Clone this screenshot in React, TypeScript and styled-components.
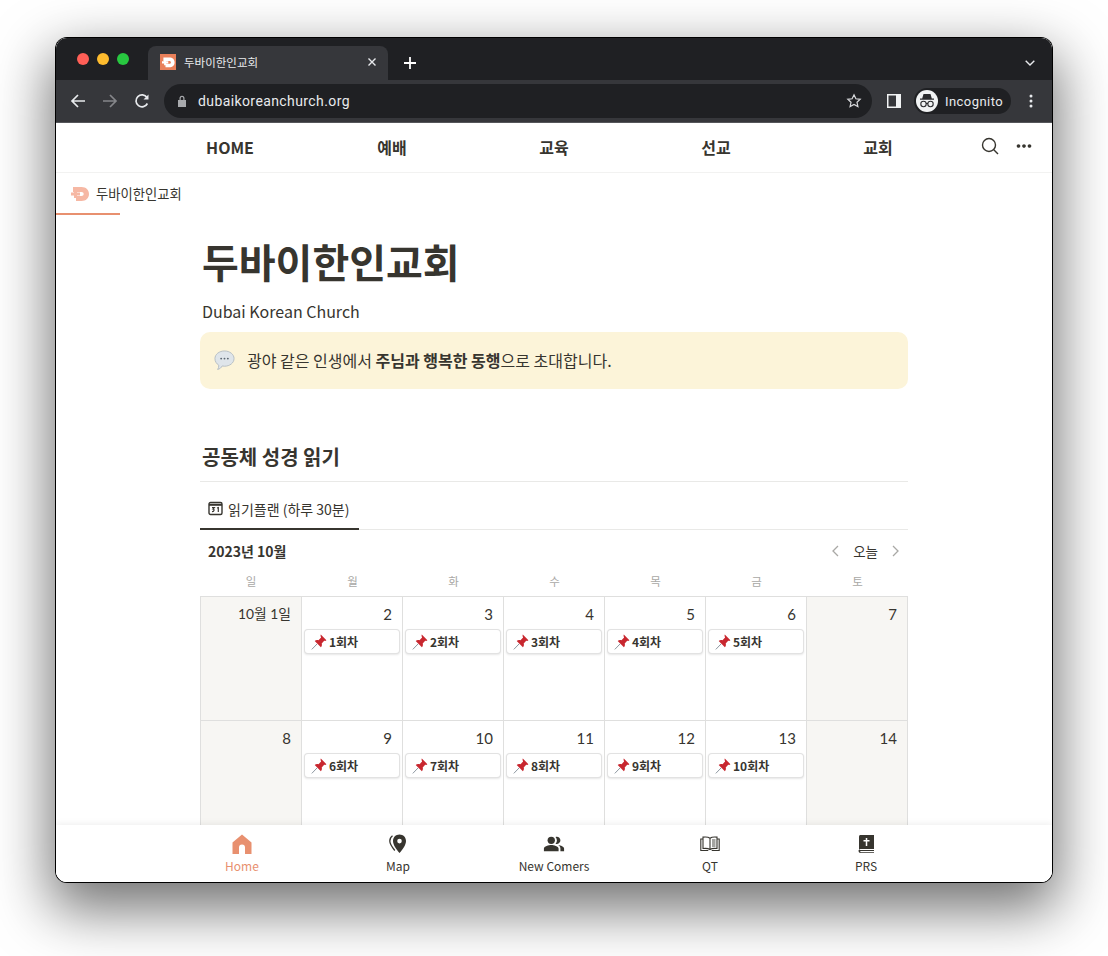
import React from 'react';
import styled, { createGlobalStyle } from 'styled-components';
import { MdPeopleAlt, MdMoreHoriz } from 'react-icons/md';

const KR = `"Noto Sans CJK KR", "Noto Sans", sans-serif`;

const GlobalStyle = createGlobalStyle`
  html, body { margin: 0; padding: 0; background: #fff; }
  body { width: 1108px; height: 956px; overflow: hidden; font-family: ${KR}; color: #37352f; }
`;

const Stage = styled.div`
  padding: 38px 0 0 56px;
`;

const Window = styled.div`
  position: relative;
  width: 996px;
  height: 844px;
  box-sizing: border-box;
  border-radius: 11px;
  overflow: hidden;
  background: #fff;
  display: flex;
  flex-direction: column;
`;

const WindowShadow = styled.div`
  width: 996px;
  height: 844px;
  border-radius: 11px;
  box-shadow: 0 0 0 1px #000, 0 22px 56px 6px rgba(0, 0, 0, 0.55);
`;

const TitleBar = styled.div`
  height: 42px;
  flex: none;
  background: #1f2023;
  display: flex;
  align-items: flex-end;
  position: relative;
`;

const Lights = styled.div`
  display: flex;
  gap: 8px;
  padding: 0 0 15px 21px;
  width: 92px;
  box-sizing: border-box;
`;

const Light = styled.span<{ $color: string }>`
  width: 12px;
  height: 12px;
  border-radius: 50%;
  background: ${(p) => p.$color};
`;

const TabShape = styled.div`
  width: 240px;
  height: 34px;
  background: #36373b;
  border-radius: 8px 8px 0 0;
  display: flex;
  align-items: center;
  padding: 0 12px 2px;
  box-sizing: border-box;
  gap: 8px;
  color: #e8eaed;
  font-size: 11.5px;
`;

const TabTitle = styled.span`
  flex: 1;
`;

const TabClose = styled.span`
  display: flex;
  margin-right: -1px;
`;

const NewTab = styled.span`
  display: flex;
  margin: 0 0 11px 16px;
`;

const TabMenu = styled.span`
  position: absolute;
  right: 17px;
  top: 22px;
  display: flex;
`;

const Toolbar = styled.div`
  height: 42px;
  flex: none;
  background: #36373b;
  display: flex;
  align-items: center;
  padding: 0 0 0 14px;
  border-bottom: 1px solid #55565a;
`;

const NavGlyphs = styled.div`
  display: flex;
  align-items: center;
  gap: 16px;
  width: 94px;
`;

const AddressBar = styled.div`
  width: 708px;
  height: 34px;
  border-radius: 17px;
  background: #1f2023;
  display: flex;
  align-items: center;
  padding: 0 10px 0 13px;
  box-sizing: border-box;
  color: #e8eaed;
  font: 400 14px Roboto, sans-serif;
  letter-spacing: 0.4px;
  gap: 11px;
`;

const Url = styled.span`
  flex: 1;
`;

const ToolbarRight = styled.div`
  display: flex;
  align-items: center;
  margin-left: 15px;
`;

const Profile = styled.div`
  width: 97px;
  height: 26px;
  margin-left: 13px;
  border-radius: 13px;
  background: #1f2023;
  display: flex;
  align-items: center;
  gap: 7px;
  padding-left: 2px;
  box-sizing: border-box;
  color: #e8eaed;
  font: 400 13px Roboto, sans-serif;
  letter-spacing: 0.45px;
`;

const ProfileFace = styled.span`
  width: 22px;
  height: 22px;
  border-radius: 50%;
  background: #f1f3f4;
  display: flex;
  align-items: center;
  justify-content: center;
`;

const KebabWrap = styled.span`
  display: flex;
  margin-left: 18px;
`;

const Page = styled.div`
  flex: 1;
  overflow: hidden;
  position: relative;
`;

const TopNav = styled.nav`
  height: 49px;
  border-bottom: 1px solid #f2f2f1;
  position: relative;
  display: grid;
  grid-template-columns: repeat(5, 162px);
  justify-content: center;
  align-items: center;
`;

const NavItem = styled.a`
  text-align: center;
  font-size: 16px;
  font-weight: 700;
  color: #37352f;
  line-height: 49px;
`;

const NavActions = styled.div`
  position: absolute;
  right: 17px;
  top: 12px;
  display: flex;
  align-items: center;
  gap: 13px;
  color: #37352f;
`;

const SearchGlyph = styled.svg`
  margin-left: -2px;
`;

const Breadcrumb = styled.div`
  height: 42px;
  display: flex;
  align-items: flex-start;
`;

const CrumbTab = styled.div`
  width: 49px;
  height: 40px;
  border-bottom: 2px solid #e8906f;
  display: flex;
  align-items: center;
  padding: 0 0 0 15px;
  gap: 7px;
  font-size: 13.3px;
  color: #37352f;
  white-space: nowrap;
  svg { flex: none; margin-top: 1px; }
`;

const Content = styled.main`
  width: 708px;
  margin: 0 0 0 144px;
`;

const Title = styled.h1`
  margin: 20px 0 0 2px;
  font-size: 40px;
  line-height: 52px;
  font-weight: 700;
  color: #37352f;
`;

const Subtitle = styled.p`
  margin: 12px 0 0 2px;
  font-size: 16px;
  line-height: 24px;
`;

const Callout = styled.div`
  margin-top: 9px;
  height: 57px;
  background: #fcf4d9;
  border-radius: 10px;
  display: flex;
  align-items: center;
  padding: 0 0 1px 14px;
  box-sizing: border-box;
  gap: 12px;
  font-size: 16px;
`;

const Strong = styled.strong`
  font-weight: 700;
`;

const Heading = styled.h2`
  margin: 52px 0 0;
  padding: 0 0 8px 2px;
  font-size: 20px;
  line-height: 32px;
  font-weight: 700;
  border-bottom: 1px solid #e9e9e7;
`;

const ViewTabs = styled.div`
  margin-top: 12px;
  height: 35px;
  border-bottom: 1px solid #e9e9e7;
  display: flex;
`;

const ViewTab = styled.div`
  height: 36px;
  width: 159px;
  box-sizing: border-box;
  border-bottom: 2px solid #37352f;
  padding: 0 0 5px 8px;
  display: flex;
  align-items: center;
  gap: 5px;
  font-size: 14px;
`;

const CalendarHead = styled.div`
  height: 42px;
  display: flex;
  align-items: center;
  justify-content: space-between;
  padding: 0 8px;
`;

const Month = styled.span`
  font-size: 14px;
  font-weight: 700;
`;

const Pager = styled.div`
  display: flex;
  align-items: center;
  font-size: 13.5px;
  gap: 14px;
`;

const Weekdays = styled.div`
  display: grid;
  grid-template-columns: 102px repeat(6, 101px);
  height: 24px;
`;

const Weekday = styled.span`
  text-align: center;
  font-size: 11.5px;
  line-height: 18px;
  color: #a9a8a5;
`;

const Grid = styled.div`
  display: grid;
  grid-template-columns: 102px repeat(6, 101px);
  grid-auto-rows: 124px;
  border-top: 1px solid #dfdfde;
`;

const Day = styled.div<{ $weekend: boolean }>`
  background: ${(p) => (p.$weekend ? '#f7f6f3' : '#fff')};
  border-right: 1px solid #dfdfde;
  border-bottom: 1px solid #dfdfde;
  box-sizing: border-box;
  padding: 0 2px;
  &:nth-child(7n + 1) { border-left: 1px solid #dfdfde; }
`;

const DayNumber = styled.div<{ $month?: boolean }>`
  text-align: right;
  font-family: Lato, "Noto Sans CJK KR", sans-serif;
  font-size: ${(p) => (p.$month ? '13.8px' : '15px')};
  line-height: 32px;
  padding: 1px 8px 0 0;
  color: #37352f;
`;

const Card = styled.div`
  height: 25px;
  width: 96px;
  box-sizing: border-box;
  border-radius: 4px;
  background: #fff;
  border: 1px solid rgba(15, 15, 15, 0.12);
  box-shadow: 0 1px 2px rgba(15, 15, 15, 0.1);
  display: flex;
  align-items: center;
  padding: 0 0 0 6px;
  gap: 2px;
  margin-top: -1px;
  font-size: 12px;
  font-weight: 700;
`;

const BottomBar = styled.nav`
  position: absolute;
  left: 0;
  right: 0;
  bottom: 0;
  height: 57px;
  background: #fff;
  box-shadow: 0 -2px 6px rgba(0, 0, 0, 0.06);
  display: grid;
  grid-template-columns: repeat(5, 156px);
  justify-content: center;
`;

const BottomItem = styled.a<{ $active?: boolean }>`
  display: flex;
  flex-direction: column;
  align-items: center;
  padding-top: 6px;
  font-size: 12px;
  line-height: 18px;
  color: ${(p) => (p.$active ? '#e8906f' : '#37352f')};
`;

const BottomIcon = styled.span`
  height: 26px;
  display: flex;
  align-items: center;
  justify-content: center;
`;

const Logo = ({ color }: { color: string }) => (
  <svg width={18} height={14} viewBox="0 0 18 14">
    <path fill={color} d="M2 0h8.500C15 0 18 2.800 18 7s-3 7-7.500 7H5V9h5.500c1.300 0 2.200-.8 2.200-2s-.9-2-2.200-2H2z" />
    <path fill={color} d="M0 5.500h3V3h3v2.500h3v3H6V11H3V8.500H0z" />
  </svg>
);

const Pin = () => (
  <svg width={16} height={16} viewBox="0 0 16 16">
    <path d="M.8 15.400 6 10" stroke="#8d97a0" strokeWidth="1" />
    <path fill="#c8272f" d="M9.800.6 15.400 6.200c-.5.8-1.400.9-2.200.6l-2.500 2.600c.5 1.500.2 2.800-.8 3.800L3.700 7c1-1 2.300-1.300 3.800-.8l2.600-2.600c-.4-.9-.8-2.100-.3-3z" />
  </svg>
);

const Balloon = () => (
  <svg width={21} height={21} viewBox="0 0 22 22">
    <path fill="#dfe5ea" stroke="#aeb8c0" strokeWidth="0.9" d="M11 1c5.500 0 10 3.500 10 8s-4.500 8-10 8c-.9 0-1.700-.1-2.500-.3-.8 1.800-2.400 3.100-4.700 3.700.9-1.300 1.300-2.700 1.200-4.500C2.500 14.400 1 11.900 1 9c0-4.500 4.500-8 10-8z" />
    <circle cx="7.500" cy="9" r="1" fill="#5d6872" />
    <circle cx="11" cy="9" r="1" fill="#5d6872" />
    <circle cx="14.500" cy="9" r="1" fill="#5d6872" />
  </svg>
);

const weekdays = ['일', '월', '화', '수', '목', '금', '토'];

const days = [
  { label: '10월 1일' },
  { label: '2', card: '1회차' },
  { label: '3', card: '2회차' },
  { label: '4', card: '3회차' },
  { label: '5', card: '4회차' },
  { label: '6', card: '5회차' },
  { label: '7' },
  { label: '8' },
  { label: '9', card: '6회차' },
  { label: '10', card: '7회차' },
  { label: '11', card: '8회차' },
  { label: '12', card: '9회차' },
  { label: '13', card: '10회차' },
  { label: '14' },
];

export default function App() {
  return (
    <Stage>
      <GlobalStyle />
      <WindowShadow>
        <Window>
          <TitleBar>
            <Lights>
              <Light $color="#ff5f57" />
              <Light $color="#febc2e" />
              <Light $color="#28c840" />
            </Lights>
            <TabShape>
              <svg width={16} height={16} viewBox="0 0 16 16">
                <rect width="16" height="16" fill="#e9805a" />
                <g transform="translate(2 3.500) scale(0.7)">
                  <path fill="#fff" d="M2 0h8.500C15 0 18 2.800 18 7s-3 7-7.500 7H5V9h5.500c1.300 0 2.200-.8 2.200-2s-.9-2-2.200-2H2z" />
                  <path fill="#fff" d="M0 5.500h3V3h3v2.500h3v3H6V11H3V8.500H0z" />
                </g>
              </svg>
              <TabTitle>두바이한인교회</TabTitle>
              <TabClose>
                <svg width={10} height={10} viewBox="0 0 10 10">
                  <path d="M1.500 1.500l7 7M8.500 1.500l-7 7" stroke="#e8eaed" strokeWidth="1.400" />
                </svg>
              </TabClose>
            </TabShape>
            <NewTab>
              <svg width={12} height={12} viewBox="0 0 12 12">
                <path d="M6 0v12M0 6h12" stroke="#fff" strokeWidth="1.800" />
              </svg>
            </NewTab>
            <TabMenu>
              <svg width={10} height={6} viewBox="0 0 10 6">
                <path d="M.7.700 5 5l4.300-4.300" fill="none" stroke="#e8eaed" strokeWidth="1.400" />
              </svg>
            </TabMenu>
          </TitleBar>

          <Toolbar>
            <NavGlyphs>
              <svg width={16} height={16} viewBox="0 0 16 16">
                <path d="M15 8H2M8 2 2 8l6 6" fill="none" stroke="#e8eaed" strokeWidth="1.700" />
              </svg>
              <svg width={16} height={16} viewBox="0 0 16 16">
                <path d="M1 8h13M8 2l6 6-6 6" fill="none" stroke="#85868a" strokeWidth="1.700" />
              </svg>
              <svg width={16} height={16} viewBox="0 0 16 16">
                <path d="M13.400 10.500A6 6 0 1 1 13 4.500" fill="none" stroke="#e8eaed" strokeWidth="1.700" />
                <path d="M14.500 1.500v5h-5z" fill="#e8eaed" />
              </svg>
            </NavGlyphs>
            <AddressBar>
              <svg width={10} height={12} viewBox="0 0 10 12">
                <path fill="#a8aaad" d="M1 5h8v7H1zM2.500 5V3.300a2.500 2.500 0 0 1 5 0V5H6.300V3.300a1.300 1.300 0 0 0-2.600 0V5z" />
              </svg>
              <Url>dubaikoreanchurch.org</Url>
              <svg width={16} height={16} viewBox="0 0 16 16">
                <path d="M8 1.800l1.900 4 4.300.5-3.200 3 .9 4.300L8 11.400l-3.900 2.200.9-4.300-3.200-3 4.300-.5z" fill="none" stroke="#d8d9dc" strokeWidth="1.200" />
              </svg>
            </AddressBar>
            <ToolbarRight>
              <svg width={14} height={14} viewBox="0 0 14 14">
                <path fillRule="evenodd" fill="#f1f3f4" d="M0 0h14v14H0zM1.500 1.500v11H9v-11z" />
              </svg>
              <Profile>
                <ProfileFace>
                  <svg width={18} height={16} viewBox="0 0 18 16">
                    <path fill="#2a2b2e" d="M5.500 1h7l1.300 4.500H16v1.200H2V5.500h2.200z" />
                    <circle cx="5.500" cy="11" r="2.700" fill="none" stroke="#2a2b2e" strokeWidth="1.100" />
                    <circle cx="12.500" cy="11" r="2.700" fill="none" stroke="#2a2b2e" strokeWidth="1.100" />
                    <path d="M8 10.500h2" stroke="#2a2b2e" strokeWidth="1.100" />
                  </svg>
                </ProfileFace>
                Incognito
              </Profile>
              <KebabWrap>
                <svg width={4} height={14} viewBox="0 0 4 14">
                  <circle cx="2" cy="2" r="1.500" fill="#e8eaed" />
                  <circle cx="2" cy="7" r="1.500" fill="#e8eaed" />
                  <circle cx="2" cy="12" r="1.500" fill="#e8eaed" />
                </svg>
              </KebabWrap>
            </ToolbarRight>
          </Toolbar>

          <Page>
            <TopNav>
              <NavItem>HOME</NavItem>
              <NavItem>예배</NavItem>
              <NavItem>교육</NavItem>
              <NavItem>선교</NavItem>
              <NavItem>교회</NavItem>
              <NavActions>
                <SearchGlyph width={20} height={20} viewBox="0 0 20 20">
                  <circle cx="9" cy="9" r="6.500" fill="none" stroke="#37352f" strokeWidth="1.400" />
                  <path d="M13.800 13.800 18 18" stroke="#37352f" strokeWidth="1.400" />
                </SearchGlyph>
                <MdMoreHoriz size={22} />
              </NavActions>
            </TopNav>

            <Breadcrumb>
              <CrumbTab>
                <Logo color="#f6b8a4" />
                두바이한인교회
              </CrumbTab>
            </Breadcrumb>

            <Content>
              <Title>두바이한인교회</Title>
              <Subtitle>Dubai Korean Church</Subtitle>
              <Callout>
                <Balloon />
                <span>
                  광야 같은 인생에서 <Strong>주님과 행복한 동행</Strong>으로 초대합니다.
                </span>
              </Callout>

              <Heading>공동체 성경 읽기</Heading>

              <ViewTabs>
                <ViewTab>
                  <svg width={15} height={15} viewBox="0 0 15 15">
                    <rect x="1" y="1.500" width="13" height="12" rx="1.500" fill="none" stroke="#37352f" strokeWidth="1.400" />
                    <path d="M1 3.800h13" stroke="#37352f" strokeWidth="2" />
                    <path d="M4 6.500h2.300L5 8c1.500 0 1.500 2.800-1 2.500M9 7l1.300-.5V11" fill="none" stroke="#37352f" strokeWidth="1.200" />
                  </svg>
                  읽기플랜 (하루 30분)
                </ViewTab>
              </ViewTabs>

              <CalendarHead>
                <Month>2023년 10월</Month>
                <Pager>
                  <svg width={8} height={12} viewBox="0 0 8 12">
                    <path d="M7 1 2 6l5 5" fill="none" stroke="#a9a8a5" strokeWidth="1.300" />
                  </svg>
                  <span>오늘</span>
                  <svg width={8} height={12} viewBox="0 0 8 12">
                    <path d="m1 1 5 5-5 5" fill="none" stroke="#a9a8a5" strokeWidth="1.300" />
                  </svg>
                </Pager>
              </CalendarHead>

              <Weekdays>
                {weekdays.map((w) => (
                  <Weekday key={w}>{w}</Weekday>
                ))}
              </Weekdays>

              <Grid>
                {days.map((d, i) => (
                  <Day key={d.label} $weekend={i % 7 === 0 || i % 7 === 6}>
                    <DayNumber $month={d.label.length > 2}>{d.label}</DayNumber>
                    {d.card && (
                      <Card>
                        <Pin />
                        {d.card}
                      </Card>
                    )}
                  </Day>
                ))}
              </Grid>
            </Content>

            <BottomBar>
              <BottomItem $active>
                <BottomIcon>
                  <svg width={20} height={20} viewBox="0 0 20 20">
                    <path fill="#e8906f" fillRule="evenodd" d="M10 0.500 19.500 8.500V20H13V13.500a3 3 0 0 0-6 0V20H.5V8.500z" />
                  </svg>
                </BottomIcon>
                Home
              </BottomItem>
              <BottomItem>
                <BottomIcon>
                  <svg width={18} height={20} viewBox="0 0 18 20">
                    <path fill="#37352f" fillRule="evenodd" d="M10.500.5c3.700 0 6.500 2.800 6.500 6.500 0 4-3.500 8.500-6.500 12-3-3.500-6.500-8-6.500-12C4 3.300 6.800.5 10.500.5zm0 4.300a2.300 2.300 0 1 0 0 4.600 2.300 2.300 0 0 0 0-4.600z" />
                    <path fill="none" stroke="#37352f" strokeWidth="1.300" d="M3.500 1.800C1.800 3 .8 5 .8 7c0 3 2.400 6.300 5 9.500" />
                  </svg>
                </BottomIcon>
                Map
              </BottomItem>
              <BottomItem>
                <BottomIcon>
                  <MdPeopleAlt size={22} />
                </BottomIcon>
                New Comers
              </BottomItem>
              <BottomItem>
                <BottomIcon>
                  <svg width={20} height={16} viewBox="0 0 20 16">
                    <path fill="none" stroke="#37352f" strokeWidth="1.100" d="M10 2.200C8.500 1 5.500.8 3 1.100V12.500c2.500-.3 5.500-.1 7 1.100 1.500-1.200 4.500-1.400 7-1.100V1.100C14.500.8 11.500 1 10 2.200zM10 2.200v11.400M3 3H.8v11.500h7.500M17 3h2.200v11.500h-7.500" />
                    <path stroke="#37352f" strokeWidth="0.900" d="M12 4h3.500M12 6h3.500M12 8h3.500M12 10h3.500" />
                  </svg>
                </BottomIcon>
                QT
              </BottomItem>
              <BottomItem>
                <BottomIcon>
                  <svg width={16} height={18} viewBox="0 0 16 18">
                    <path fill="#37352f" d="M2 0h14v14H2.500C1.700 14 1 14.600 1 15.300V2a2 2 0 0 1 1-2z" />
                    <path fill="#37352f" d="M.5 15.300A2.200 2.200 0 0 1 2.500 15H16v1H2.500a.8.8 0 0 0 0 1.200H16v.8H2.500C1.200 18 .4 16.700.5 15.300z" />
                    <path stroke="#fff" strokeWidth="1.500" d="M8.500 3v8M5.500 5.700h6" />
                  </svg>
                </BottomIcon>
                PRS
              </BottomItem>
            </BottomBar>
          </Page>
        </Window>
      </WindowShadow>
    </Stage>
  );
}
